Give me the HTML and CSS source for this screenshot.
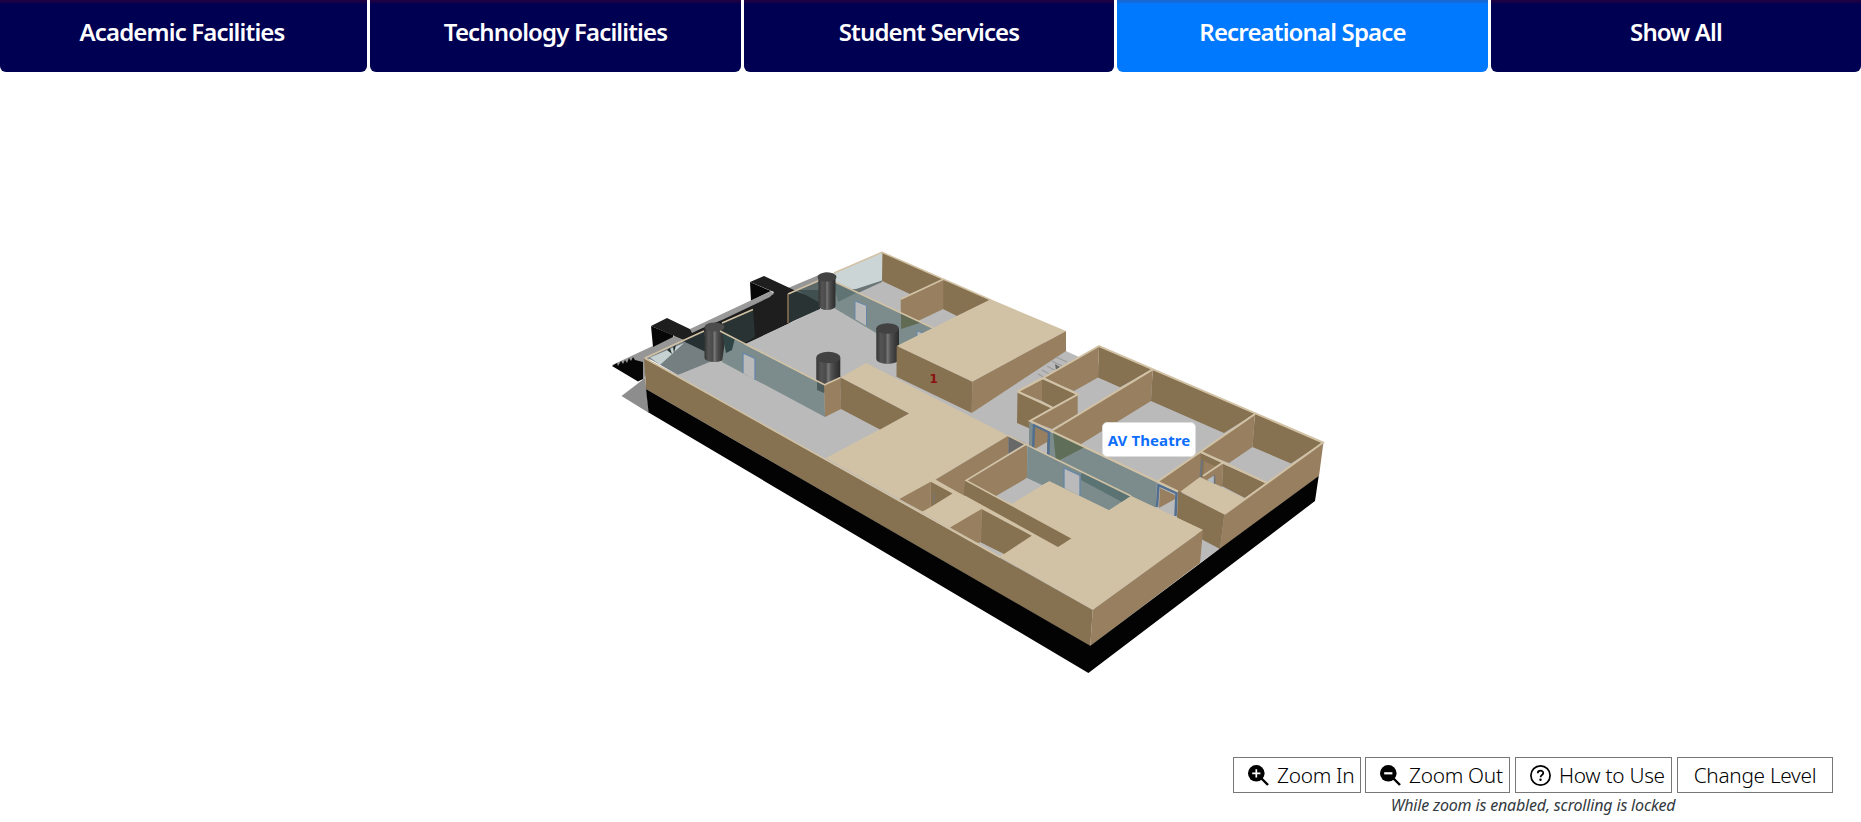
FILE: index.html
```html
<!DOCTYPE html>
<html lang="en">
<head>
<meta charset="utf-8">
<title>Campus Map</title>
<link rel="stylesheet" href="styles.css">
</head>
<body>
<nav class="tabs">
  <button class="tab first">Academic Facilities</button>
  <button class="tab">Technology Facilities</button>
  <button class="tab">Student Services</button>
  <button class="tab active">Recreational Space</button>
  <button class="tab">Show All</button>
</nav>
<main class="stage">
<svg class="model" width="1861" height="660" viewBox="0 72 1861 660">
  <defs>
    <linearGradient id="col"><stop offset="0" stop-color="#343434"/><stop offset=".2" stop-color="#555"/><stop offset=".4" stop-color="#4a4a4a"/><stop offset=".5" stop-color="#777"/><stop offset=".62" stop-color="#525252"/><stop offset=".8" stop-color="#3e3e3e"/><stop offset="1" stop-color="#2c2c2c"/></linearGradient>
  </defs>
  <!-- entrance -->
  <path fill="#8d8d8d" d="M621.500 396L645 378L649 413z"/>
  <path fill="#969696" d="M612 365L672 337L826 272L836 274L842 280L780 310L650 357L644 380z"/>
  <path fill="#060606" d="M612 366L617 363L618 366L621 361L623 364L625 360L627 363L629 358L631 361L633 357L635 360L643 362L643 379L638 381.500z"/>
  <path fill="#070707" d="M651 326L673 335L673 337L653 347zM750 282L771 291L751 301z"/>
  <path fill="#1e1e1e" d="M651 326L667 318L694 331L722 320L770 297L774 292L750 282L764 276L794 290L822 302L788 324L722 356L706 350L684 340z"/>
  <path fill="#999" d="M690 329L771 291L774 294L692 333z"/>
  <!-- floor -->
  <path fill="#bababa" d="M650 361L678 375L788 324L822 308L882 281L972 315L1066 351L1079 357L1320 445L1318 477L1200 563L1092 610z"/>
  <!-- back rooms -->
  <path fill="#cbd5d5" d="M834 273L882 252.300V281L858 292L833 281z"/>
  <path fill="#697675" d="M833 281L838 290L856 289L882 280.500V282L858 293L848 296z"/>
  <path fill="#867151" d="M882.300 252.300L943.300 279L991 300L957 316L943 309V280L910 294L882 281z"/>
  <path fill="#977f60" d="M900.700 299L943.300 279.300V309L901 329z"/>
  <path class="edge" d="M834 273L882 252.300L991 300M900.700 299.300L943.300 279.300"/>
  <!-- lobby glass, right -->
  <path fill="#2a3333" d="M788 294L820 281V309L789 323z"/>
  <path fill="#5d6969" d="M795 291L820 281L832 283L850 291L832 304z"/>
  <path fill="#405050" d="M797 290H820V303z"/>
  <path fill="#7c8c8c" d="M833 281L933 328L898 346L834 308z"/>
  <path fill="#607474" d="M833 281L858 292L838 302z"/>
  <path fill="#616a53" d="M901 313L921 322.500L901 329z"/>
  <path fill="#bababa" stroke="#6787a9" d="M855 319V301L866.500 305.500V326M917 338V331L923 333"/>
  <path class="edge" d="M788 294L818 281M833 281L933 328"/>
  <path stroke="#8e7658" stroke-width="1.500" d="M788 294V323"/>
  <!-- lobby glass, left -->
  <path fill="#757e80" d="M648 358L704 331L712 361L678 375z"/>
  <path fill="#c6d1d2" d="M650 357.500L684 343L660 365z"/>
  <path fill="#263032" d="M683 341L704 331L708 353zM667 350L670 348L672 354zM673 347L676 345L674 353z"/>
  <path fill="#2a3333" d="M722 322L753 309L755 337L733 350L722 346z"/>
  <path class="edge" d="M645 358L704 331M722 323L753 309.500"/>
  <path fill="url(#col)" d="M704.500 327V358A10 4 0 0 0 724.500 358V327z"/>
  <ellipse cx="714.500" cy="327" rx="10" ry="4.500" fill="#4c4c4c"/>
  <path fill="url(#col)" d="M818.500 277V306A8.500 4 0 0 0 835.500 306V277z"/>
  <ellipse cx="827" cy="277" rx="9.500" ry="4.500" fill="#424242"/>
  <path fill="url(#col)" d="M876.300 328V359A11.300 5 0 0 0 899 359V328z"/>
  <ellipse cx="887.600" cy="328.500" rx="11.400" ry="5.300" fill="#424242"/>
  <path fill="url(#col)" d="M816.300 358V388A12 5 0 0 0 840.300 388V358z"/>
  <ellipse cx="828.300" cy="357.500" rx="12" ry="5.700" fill="#424242"/>
  <path fill="#7c8c8c" d="M726 335L824 385L825 417L722 362z"/>
  <path fill="#2f4444" d="M722 331L735 338L732 350L726 353z"/>
  <path fill="#4c5c5c" d="M817 381L824 385V393L817 390z"/>
  <path fill="#bababa" stroke="#6787a9" stroke-width="1.300" d="M743 373V353L755 358.500V380"/>
  <path class="edge" d="M720 331L824 384.500"/>
  <!-- upper block -->
  <path fill="#d2c2a5" d="M990.700 299.300L1066 331L972.300 381.700L896.700 346z"/>
  <path fill="#867151" d="M896.700 346L972.300 381.700L971.700 413L896.500 376.700z"/>
  <path fill="#977f60" d="M972.300 381.700L1066 331V351L971.700 413z"/>
  <text class="level" x="933.700" y="383.300">1</text>
  <path stroke="#9c9c9c" stroke-width="1.200" d="M1056 357L1067 362M1052 361L1062 366M1047 366L1056 371M1042 370L1051 375M1038 374L1047 379"/>
  <path fill="#666" d="M1055 364L1060 367L1056 370z"/>
  <!-- right wing -->
  <path fill="#977f60" d="M1099 346L1098 377.500L1074 391L1043 378z"/>
  <path fill="#867151" d="M1099 346L1152.700 369L1120 387.300L1098 377.500zM1152.700 369L1255 413.500L1224 433L1151 401zM1255 413.500L1323 442.500L1291 463.500L1252.500 447z"/>
  <path fill="#867151" d="M1017.500 391.500L1052 407.500L1031 420V429L1017 423z"/>
  <path fill="#977f60" d="M1018 391.500L1042 379V401z"/>
  <path fill="#867151" d="M1042 379L1077 394.500L1053 407L1042 401z"/>
  <path fill="#977f60" d="M1077.700 394.300V414L1052 429L1031 421z"/>
  <path fill="#977f60" d="M1053 429.500L1152.700 369L1151 401L1060 457L1053 454z"/>
  <path fill="#977f60" d="M1255 413.500L1252.500 447L1229 463L1201 452z"/>
  <path fill="#977f60" d="M1157 482L1200 453L1222 463V475L1181 493z"/>
  <path fill="#867151" d="M1200.500 453L1222 463L1201 478z"/>
  <path fill="#977f60" d="M1204 461L1217 467L1203 477z"/>
  <path stroke="#6d747b" stroke-width="2" d="M1202 460L1200.500 477"/>
  <path fill="#867151" d="M1223 464L1266 483L1245 498L1222 486z"/>
  <path fill="#977f60" d="M1223 464L1222 487L1203 478z"/>
  <path fill="#b5bdc5" d="M1207 480L1215 475V484z"/>
  <path stroke="#6d747b" stroke-width="1.500" d="M1214.500 475V484"/>
  <path fill="#d2c2a5" d="M1200 477L1244 498L1224 515L1180.500 491.500z"/>
  <path fill="#977f60" d="M1323.500 442L1319 476L1220 549L1224.300 514.500z"/>
  <path fill="#867151" d="M1178 491L1224.300 514.500L1220 549L1203 540L1177 518z"/>
  <path fill="#7c8c8c" d="M1029 422L1157 482L1156 508L1120 492L1029 446z"/>
  <path fill="#5f6e59" d="M1053 431L1085 447L1056 462z"/>
  <path fill="#977f60" stroke="#526f90" stroke-width="2.500" d="M1033 453L1034 425L1049 432L1048 462"/>
  <path fill="#bababa" d="M1035 449L1047 442V459z"/>
  <path fill="#bababa" stroke="#526f90" stroke-width="2.500" d="M1157 507L1158.500 485L1176.500 493L1175.500 516"/>
  <path fill="#977f60" d="M1160 488L1175 495V499L1159 508z"/>
  <path fill="#867151" d="M1178 492L1182 494V518L1178 517z"/>
  <!-- main roof -->
  <path fill="#d2c2a5" d="M866 363L1008.300 435.700L935 480L964 495L1013 503L1049.300 481.300L1109 510.300L1131 496L1203 530L1092.700 610L899 499L826 458L880 429.300L909 413.300L840.500 377.500z"/>
  <path fill="#977f60" d="M824 385L840.500 377.500L841 409L825 417z"/>
  <path fill="#867151" d="M840.500 377.500L909 413.500L880 429.500L841 409z"/>
  <path fill="#977f60" d="M1008.300 435.700V454L965 481V496L935 480z"/>
  <path fill="#686868" d="M1008.300 435.700L1026 443.500L1008.300 454z"/>
  <path fill="#977f60" d="M966 481L1027 444.500V478L996 497z"/>
  <path fill="#bababa" d="M996 496L1027 478L1042 485L1013 504z"/>
  <path fill="#7c8c8c" d="M1027.300 445L1131 496L1109 510.300L1049.300 481.300L1042 485L1027 478z"/>
  <path fill="#5c7373" d="M1081 474L1083 473L1131 496L1122 502L1081 480z"/>
  <path fill="#bababa" stroke="#6787a9" stroke-width="1.300" d="M1064 488V468L1080 475.500V496"/>
  <path fill="#867151" d="M965 480L1072 538L1058 547L964 495z"/>
  <path fill="#d2c2a5" d="M1013 503L1049.300 481.300L1109 510.300L1131 496L1203 530L1110 580L1072 538z"/>
  <path class="edge" d="M840.500 377.500L824 385M1008 435.700L1131 496M1027 443.500L966 480.500L1072 538M933 479L982 507.500"/>
  <path fill="#977f60" d="M899.300 499L930.700 481.700V507L922.500 511.500z"/>
  <path fill="#867151" d="M930.700 481.700L952.500 493.500L930.700 507z"/>
  <path stroke="#777a7d" d="M934 493V503"/>
  <path fill="#977f60" d="M950 527.500L981.500 509V544L976 542z"/>
  <path fill="#867151" d="M981.500 509L1031.700 535.700L1004 554L981 543z"/>
  <path fill="#bababa" d="M980 542L1003.500 554L1000 556L979 544z"/>
  <!-- outer walls -->
  <path fill="#977f60" d="M1203 530L1200 563L1090.300 646L1092.700 610z"/>
  <path fill="#867151" d="M644 357.500L1092.700 610L1090.300 646L646 389z"/>
  <path fill="#030303" d="M646 389L1090.300 645.700L1220 548.500L1318.700 476L1315 501L1088.400 673L648.600 412.500z"/>
  <path class="edge" d="M644.500 358L1000 557.300"/>
  <path class="edge thick" d="M1043 378L1099 346L1323 442.500L1224.500 514M1043 378L1077.700 394.300L1030 421L1178 491.500M1017.500 391.500L1043 378M1017.500 391.500L1052 407.500M1152.700 369.300L1053 430M1255 414L1157 482M1201 452L1266 482.500M1223 462.500L1203 476"/>
</svg>
<div class="pin">AV Theatre</div>
</main>
<footer class="controls">
  <div class="buttons">
    <button class="btn b1"><svg class="icon" viewBox="0 0 21 21"><circle cx="8.300" cy="8.300" r="8.300"/><path d="M13.500 13.500L20 20" stroke="#000" stroke-width="2.400"/><path d="M8.300 4.200V12.400M4.200 8.300H12.400" stroke="#fff" stroke-width="1.700"/></svg>Zoom In</button>
    <button class="btn b2"><svg class="icon" viewBox="0 0 21 21"><circle cx="8.300" cy="8.300" r="8.300"/><path d="M13.500 13.500L20 20" stroke="#000" stroke-width="2.400"/><path d="M4.200 8.300H12.400" stroke="#fff" stroke-width="2.200"/></svg>Zoom Out</button>
    <button class="btn b3"><svg class="icon" viewBox="0 0 21 21"><circle cx="10.500" cy="10.500" r="9.600" fill="none" stroke="#000" stroke-width="1.700"/><path d="M7.700 8.200C7.900 4.800 13.400 4.900 13.300 8.100C13.200 10 10.600 10.100 10.500 12.300" fill="none" stroke="#000" stroke-width="1.700"/><circle cx="10.500" cy="14.800" r="1.200"/></svg>How to Use</button>
    <button class="btn b4">Change Level</button>
  </div>
  <p class="note">While zoom is enabled, scrolling is locked</p>
</footer>
</body>
</html>
```
FILE: styles.css
```css
* { box-sizing: border-box; }
body { margin: 0; width: 1861px; height: 822px; overflow: hidden; background: #fff; font-family: "Noto Sans", "Open Sans", sans-serif; display: flex; flex-direction: column; }
button { font-family: inherit; margin: 0; white-space: nowrap; }
.tabs { display: grid; grid-template-columns: 367px 371px 370px 371px 370px; gap: 3px; height: 72px; flex: none; }
.tab { border: 0; padding: 0 0 9px; background: linear-gradient(#1b0044 0 2px, #000052 4px); color: #fff; font-size: 24px; font-weight: 600; letter-spacing: -0.85px; border-radius: 0 0 6px 6px; line-height: 32px; }
.tab.first { padding-right: 3px; }
.tab.active { background: linear-gradient(#1869d8 0 2px, #0079ff 4px); }
.stage { position: relative; height: 660px; flex: none; }
.model { display: block; }
.edge { fill: none; stroke: #d2c2a5; stroke-width: 1.5; }
.thick { stroke-width: 2; }
.level { font: bold 12px "DejaVu Sans", sans-serif; fill: #8b1010; text-anchor: middle; }
.pin { position: absolute; left: 1102px; top: 350px; width: 94px; height: 35px; background: #fff; border: 1px solid #dedede; border-radius: 5px; color: #0d6efd; font-weight: 700; font-size: 15px; letter-spacing: 0.1px; line-height: 34px; text-align: center; white-space: nowrap; }
.controls { padding: 25px 28px 0 1233px; height: 90px; }
.buttons { display: flex; }
.btn { height: 36px; border: 1px solid #777; background: #fff; color: #000; display: flex; align-items: center; padding: 0 0 0 14px; font-size: 20.8px; font-weight: 300; letter-spacing: -0.28px; line-height: 34px; }
.b1 { width: 128px; margin-right: 4px; }
.b2 { width: 145px; margin-right: 5px; }
.b3 { width: 157px; margin-right: 5px; }
.b4 { width: 156px; padding: 0; justify-content: center; }
.icon { width: 21px; height: 21px; margin-right: 8px; flex: none; }
.note { margin: 0; font-size: 16px; line-height: 24px; letter-spacing: -0.17px; font-style: italic; text-align: center; color: #333a40; white-space: nowrap; }
```
